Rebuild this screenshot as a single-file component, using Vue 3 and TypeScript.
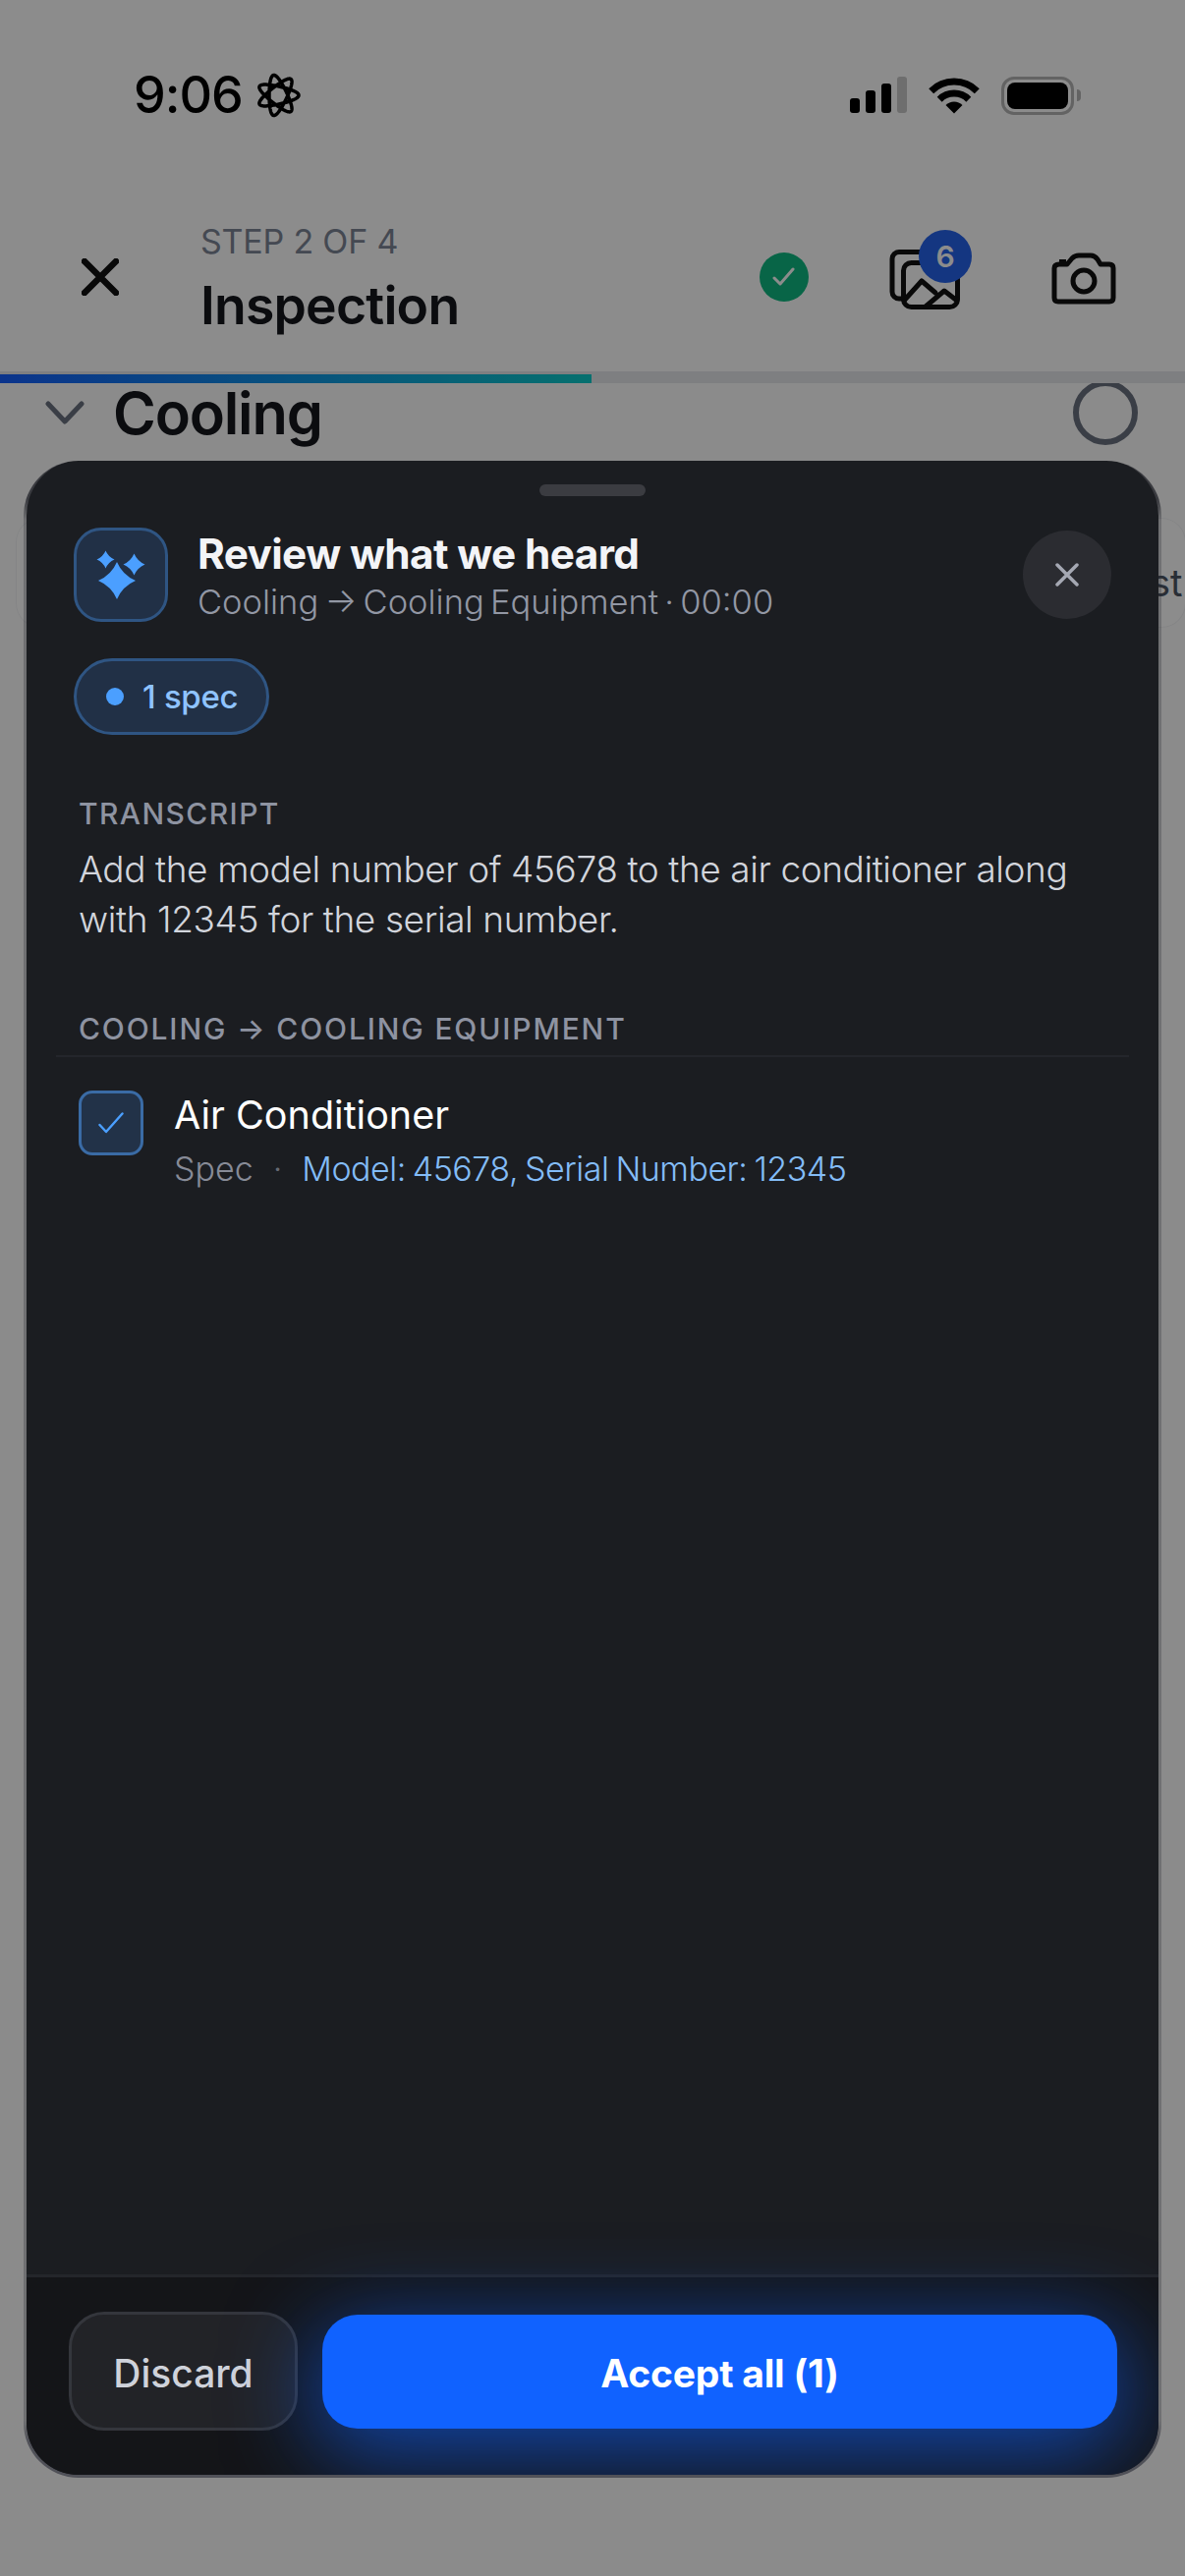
<template>
  <div class="page">
    <div class="status">
      <div class="time">
        <span>9:06</span>
        <svg class="rosette" width="46" height="46" viewBox="-23 -23 46 46">
          <path :d="rosette" fill="none" stroke="#000" stroke-width="3.500" />
        </svg>
      </div>
      <div class="status-icons">
        <div class="signal">
          <i v-for="(h, n) in bars" :key="n" :class="{ off: n === 3 }" :style="{ height: h + 'px' }"></i>
        </div>
        <svg class="wifi" width="52" height="38" viewBox="0 0 52 38">
          <path d="M2.700 14.700a33 33 0 0 1 46.600 0M11.200 23.200a21 21 0 0 1 29.600 0" fill="none" stroke="#000" stroke-width="7" />
          <path d="M26 37.500 17.500 29a12 12 0 0 1 17 0Z" fill="#000" />
        </svg>
        <div class="battery"><i></i></div>
      </div>
    </div>

    <header class="header">
      <svg class="close-icon" width="38" height="38" viewBox="0 0 38 38">
        <path d="M3 3l32 32M35 3L3 35" stroke="#111" stroke-width="6.500" stroke-linecap="round" />
      </svg>
      <div class="heading">
        <div class="step">STEP 2 OF 4</div>
        <div class="name">Inspection</div>
      </div>
      <div class="saved">
        <svg width="24" height="20" viewBox="0 0 24 20">
          <path d="M2 11l6 6L21 2" fill="none" stroke="#fff" stroke-width="3" stroke-linecap="round" stroke-linejoin="round" />
        </svg>
      </div>
      <div class="gallery">
        <svg width="85" height="75" viewBox="0 0 85 75" fill="none" stroke="#111" stroke-width="5" stroke-linecap="round" stroke-linejoin="round">
          <path d="M50 9.500H16a7 7 0 0 0-7 7V50a7 7 0 0 0 7 7h3" />
          <rect x="20.500" y="20.500" width="55" height="45" rx="8" />
          <path d="M21 59l18-20 14 12M43 65l19-16 13 10" />
        </svg>
        <span class="count">6</span>
      </div>
      <svg class="camera" width="68" height="60" viewBox="0 0 68 60" fill="none" stroke="#111" stroke-width="5" stroke-linejoin="round">
        <path d="M9 17H17L22 11Q25 8 29 8H41Q45 8 48 12L51 17H60Q64 17 64 21V51Q64 55 60 55H8Q4 55 4 51V21Q4 17 9 17Z" />
        <circle cx="34" cy="34" r="11" />
        <rect x="9" y="12" width="7" height="5" fill="#111" stroke="none" />
      </svg>
    </header>

    <div class="progress"><div class="progress-fill"></div></div>

    <section class="section">
      <svg width="40" height="24" viewBox="0 0 40 24">
        <path d="M3 3l17 18L37 3" fill="none" stroke="#6b7280" stroke-width="5" stroke-linecap="round" stroke-linejoin="round" />
      </svg>
      <h2>Cooling</h2>
      <div class="ring"></div>
    </section>
    <div class="behind-row"><span>st</span></div>

    <div class="scrim">
      <div class="sheet">
        <div class="handle"></div>
        <div class="sheet-head">
          <div class="spark-box">
            <svg width="52" height="52" viewBox="0 0 52 52" fill="#4b9fff">
              <path v-for="s in sparks" :key="s" :d="s" />
            </svg>
          </div>
          <div class="head-text">
            <div class="title">Review what we heard</div>
            <div class="crumb">Cooling → Cooling Equipment · 00:00</div>
          </div>
          <div class="sheet-close">
            <svg width="24" height="24" viewBox="0 0 24 24">
              <path d="M2 2l20 20M22 2L2 22" stroke="#a5a8b3" stroke-width="3.500" stroke-linecap="round" />
            </svg>
          </div>
        </div>

        <div class="pill"><i></i><span>1 spec</span></div>

        <div class="label transcript-label">TRANSCRIPT</div>
        <p class="transcript">
          Add the model number of 45678 to the air conditioner along<br />with 12345 for the serial number.
        </p>

        <div class="label group-label">COOLING → COOLING EQUIPMENT</div>
        <div class="divider"></div>

        <div class="item">
          <div class="checkbox">
            <svg width="26" height="22" viewBox="0 0 26 22">
              <path d="M1.500 13l6.500 7L24.500 1.500" fill="none" stroke="#4b9fff" stroke-width="2.400" stroke-linecap="round" stroke-linejoin="round" />
            </svg>
          </div>
          <div>
            <div class="item-name">Air Conditioner</div>
            <div class="item-meta">
              <span class="kind">Spec</span>
              <span class="sep">·</span>
              <span class="value">Model: 45678, Serial Number: 12345</span>
            </div>
          </div>
        </div>

        <footer class="footer">
          <button class="btn-discard">Discard</button>
          <button class="btn-accept">Accept all (1)</button>
        </footer>
      </div>
    </div>
  </div>
</template>

<script setup lang="ts">
  const bars: number[] = [15, 23, 30, 37];

  // seven lobed ribbon next to the clock, neighbouring lobes cross each other
  function buildRosette(a: number, b: number): string {
    const pts: string[] = [];
    for (let i = 0; i <= 420; i++) {
      const t = (i / 420) * Math.PI * 2 - Math.PI / 14;
      const x = a * Math.cos(3 * t) + b * Math.cos(-4 * t);
      const y = a * Math.sin(3 * t) + b * Math.sin(-4 * t);
      pts.push(x.toFixed(2) + ' ' + y.toFixed(2));
    }
    return 'M' + pts.join('L') + 'Z';
  }

  function star(cx: number, cy: number, h: number): string {
    const c = h * 0.3;
    return (
      `M${cx} ${cy - h}Q${cx + c} ${cy - c} ${cx + h} ${cy}` +
      `Q${cx + c} ${cy + c} ${cx} ${cy + h}` +
      `Q${cx - c} ${cy + c} ${cx - h} ${cy}` +
      `Q${cx - c} ${cy - c} ${cx} ${cy - h}Z`
    );
  }

  const rosette = buildRosette(15, 6);
  const sparks: string[] = [star(22, 32, 19), star(10.5, 10.5, 9), star(39.5, 15.5, 11)];
</script>

<style>
  html,
  body {
    margin: 0;
    background: #fff;
  }
</style>

<style scoped>
  .page {
    position: relative;
    width: 1206px;
    height: 2622px;
    overflow: hidden;
    background: #fdfdfd;
    font-family: Inter, 'Liberation Sans', sans-serif;
  }

  .status {
    display: flex;
    justify-content: space-between;
    height: 190px;
    box-sizing: border-box;
    padding: 66px 113px 0 136px;
    background: #fff;
  }

  .time {
    display: flex;
    align-items: flex-start;
    gap: 13px;
    font-size: 52px;
    line-height: 62px;
    font-weight: 500;
    letter-spacing: -1px;
    color: #000;
  }

  .rosette {
    margin-top: 8px;
  }

  .status-icons {
    display: flex;
    align-items: flex-start;
    gap: 22px;
    padding-top: 12px;
  }

  .signal {
    display: flex;
    align-items: flex-end;
    gap: 6px;
    height: 37px;
  }

  .signal i {
    width: 10px;
    border-radius: 3px;
    background: #000;
  }

  .signal i.off {
    background: #c8c8c8;
  }

  .battery {
    position: relative;
    width: 74px;
    height: 39px;
    box-sizing: border-box;
    padding: 3px;
    border: 3px solid #b4b4b4;
    border-radius: 13px;
  }

  .battery i {
    display: block;
    height: 100%;
    border-radius: 8px;
    background: #000;
  }

  .battery::after {
    content: '';
    position: absolute;
    right: -10px;
    top: 10px;
    width: 4px;
    height: 12px;
    border-radius: 0 4px 4px 0;
    background: #b4b4b4;
  }

  .header {
    position: relative;
    z-index: 1;
    display: flex;
    align-items: center;
    height: 188px;
    box-sizing: border-box;
    padding: 0 69px 4px 83px;
    background: #fff;
  }

  .close-icon {
    margin-right: 83px;
  }

  .heading {
    flex: 1;
    margin-top: 4px;
  }

  .step {
    font-size: 34px;
    line-height: 40px;
    color: #7d8596;
    letter-spacing: -0.2px;
  }

  .name {
    margin-top: 14px;
    font-size: 53.500px;
    line-height: 62px;
    font-weight: 600;
    color: #14161c;
    letter-spacing: -0.8px;
  }

  .saved {
    display: flex;
    align-items: center;
    justify-content: center;
    width: 50px;
    height: 50px;
    margin-right: 76px;
    border-radius: 50%;
    background: #10b981;
  }

  .gallery {
    position: relative;
    width: 85px;
    height: 75px;
    margin-right: 85px;
    margin-top: 4px;
  }

  .gallery svg {
    display: block;
  }

  .count {
    position: absolute;
    left: 36px;
    top: -13px;
    width: 54px;
    height: 54px;
    border-radius: 50%;
    background: #2563eb;
    color: #fff;
    font-size: 30px;
    line-height: 54px;
    font-weight: 600;
    text-align: center;
  }

  .progress {
    position: relative;
    z-index: 1;
    height: 12px;
    background: #e5e7eb;
  }

  .progress-fill {
    position: relative;
    top: 3px;
    width: 602px;
    height: 9px;
    background: linear-gradient(90deg, #145fff, #0bccca);
  }

  .section {
    display: flex;
    align-items: center;
    height: 138px;
    box-sizing: border-box;
    margin-top: -8px;
    padding: 0 48px 63px 46px;
  }

  .section h2 {
    flex: 1;
    margin: 0 0 0 29px;
    font-size: 59.500px;
    line-height: 70px;
    font-weight: 600;
    letter-spacing: -1.2px;
    color: #14161c;
  }

  .ring {
    width: 66px;
    height: 66px;
    box-sizing: border-box;
    border: 6px solid #6b7280;
    border-radius: 50%;
  }

  .behind-row {
    height: 110px;
    margin: 8px 0 0 17px;
    box-sizing: border-box;
    padding-left: 1154px;
    border-radius: 24px;
    background: #fff;
    box-shadow: 0 0 0 1px #f2f3f5;
    font-size: 38px;
    line-height: 130px;
    color: #4b5563;
    white-space: nowrap;
  }

  .scrim {
    position: absolute;
    inset: 0;
    z-index: 2;
    background: rgba(0, 0, 0, 0.45);
  }

  .sheet {
    position: absolute;
    left: 24px;
    top: 469px;
    display: flex;
    flex-direction: column;
    width: 1158px;
    height: 2053px;
    box-sizing: border-box;
    overflow: hidden;
    border: 3px solid transparent;
    border-top: 0;
    border-radius: 56px;
    background:
      linear-gradient(#1b1d21, #1b1d21) padding-box,
      linear-gradient(
          180deg,
          #3a3b40 0,
          #3a3b40 40px,
          rgba(40, 42, 50, 0.28) 60px,
          rgba(40, 42, 50, 0.28) 1995px,
          #505158 2015px
        )
        border-box;
    color: #fff;
  }

  .handle {
    width: 108px;
    height: 12px;
    margin: 24px auto 0;
    border-radius: 6px;
    background: #3b3c41;
  }

  .sheet-head {
    display: flex;
    align-items: center;
    margin: 31px 0 0 48px;
    padding-right: 48px;
  }

  .spark-box {
    display: flex;
    align-items: center;
    justify-content: center;
    width: 96px;
    height: 96px;
    box-sizing: border-box;
    border: 3px solid #2f5583;
    border-radius: 28px;
    background: #213046;
  }

  .head-text {
    flex: 1;
    margin-left: 30px;
  }

  .title {
    margin-top: 2px;
    font-size: 42.300px;
    line-height: 52px;
    font-weight: 700;
    letter-spacing: -0.6px;
    color: #f3f4f7;
  }

  .crumb {
    margin-top: 2px;
    font-size: 34.500px;
    line-height: 42px;
    font-weight: 300;
    word-spacing: -3.500px;
    color: #9297a4;
  }

  .sheet-close {
    display: flex;
    align-items: center;
    justify-content: center;
    width: 90px;
    height: 90px;
    border-radius: 50%;
    background: #2b2c31;
  }

  .pill {
    display: flex;
    align-items: center;
    align-self: flex-start;
    height: 78px;
    box-sizing: border-box;
    margin: 36px 0 0 48px;
    padding: 0 29px 0 30px;
    border: 3px solid #2f5583;
    border-radius: 39px;
    background: #213046;
    font-size: 33px;
    font-weight: 500;
    letter-spacing: -0.3px;
    color: #8fc3ff;
  }

  .pill i {
    width: 18px;
    height: 18px;
    margin-right: 19px;
    border-radius: 50%;
    background: #4b9fff;
  }

  .label {
    margin-left: 53px;
    font-size: 30px;
    line-height: 36px;
    font-weight: 500;
    letter-spacing: 1.400px;
    color: #8e93a1;
  }

  .transcript-label {
    margin-top: 62px;
  }

  .transcript {
    margin: 13px 0 0 53px;
    font-size: 37px;
    line-height: 51px;
    font-weight: 300;
    letter-spacing: -0.4px;
    color: #d2d5dc;
    white-space: nowrap;
  }

  .group-label {
    margin-top: 68px;
    letter-spacing: 1.850px;
  }

  .divider {
    height: 2px;
    margin: 9px 30px 0 30px;
    background: #24262b;
  }

  .item {
    display: flex;
    margin: 34px 0 0 53px;
  }

  .checkbox {
    display: flex;
    align-items: center;
    justify-content: center;
    width: 66px;
    height: 66px;
    box-sizing: border-box;
    margin-right: 31px;
    border: 3px solid #3a6ba5;
    border-radius: 14px;
    background: #223248;
  }

  .item-name {
    margin-top: 2px;
    font-size: 39.500px;
    line-height: 46px;
    font-weight: 400;
    color: #fff;
  }

  .item-meta {
    display: flex;
    margin-top: 11px;
    font-size: 34px;
    line-height: 42px;
    font-weight: 300;
  }

  .kind {
    color: #878b97;
  }

  .sep {
    margin: 0 20px;
    color: #666a73;
  }

  .value {
    letter-spacing: -0.5px;
    word-spacing: -2px;
    color: #83bcf7;
  }

  .footer {
    display: flex;
    gap: 25px;
    align-items: center;
    height: 204px;
    box-sizing: border-box;
    margin-top: auto;
    padding: 0 42px 10px 43px;
    border-top: 3px solid #24262b;
    background: #141518;
  }

  .footer button {
    margin: 0;
    padding: 3px 0 0;
    border-radius: 36px;
    font-family: inherit;
    font-size: 39px;
  }

  .btn-discard {
    flex: none;
    width: 233px;
    height: 121px;
    box-sizing: border-box;
    border: 3px solid #34363c;
    background: #222327;
    color: #cfd2da;
    font-weight: 500;
  }

  .btn-accept {
    flex: 1;
    height: 116px;
    border: 0;
    background: #1062ff;
    color: #fff;
    font-weight: 700;
    letter-spacing: -0.2px;
    box-shadow: 0 20px 90px 6px rgba(16, 98, 255, 0.62);
  }
</style>
